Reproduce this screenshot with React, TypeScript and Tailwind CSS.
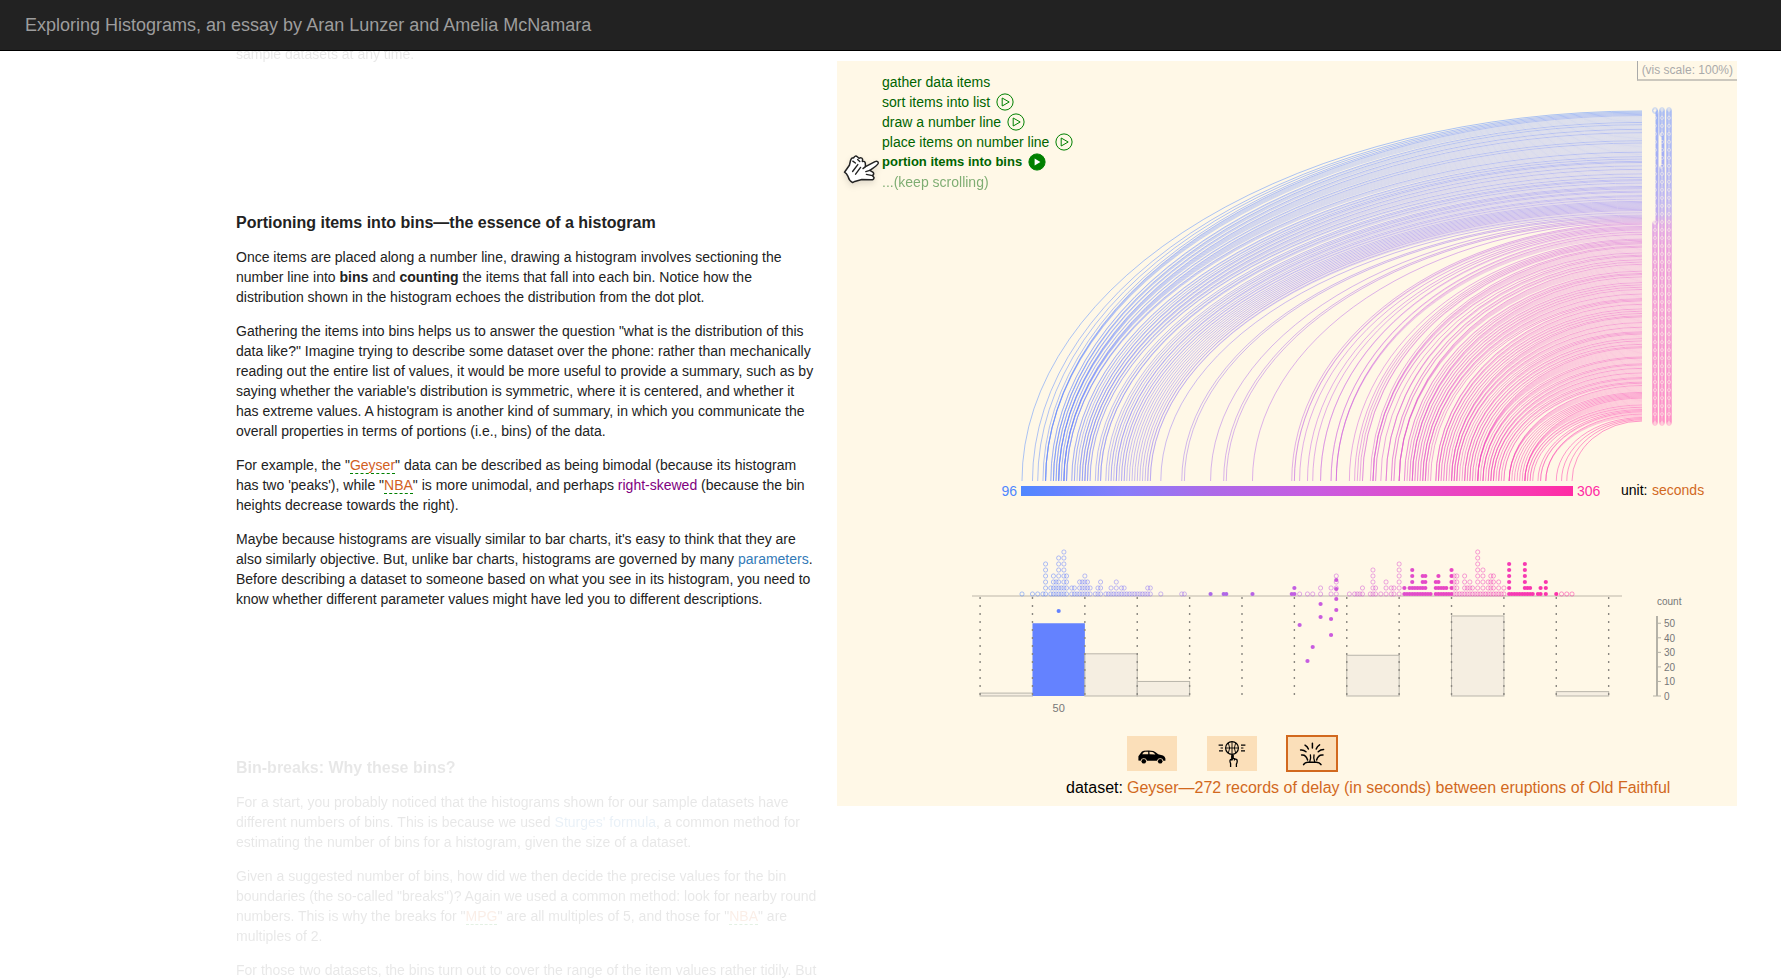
import React from "react";

/* Old Faithful eruption records, in minutes. */
const ERUPTIONS = `
3.600 1.800 3.333 2.283 4.533 2.883 4.700 3.600 1.950 4.350 1.833 3.917 4.200 1.750 4.700 2.167 1.750 4.800 1.600 4.250
1.800 1.750 3.450 3.067 4.533 3.600 1.967 4.083 3.850 4.433 4.300 4.467 3.367 4.033 3.833 2.017 1.867 4.833 1.833 4.783
4.350 1.883 4.567 1.750 4.533 3.317 3.833 2.100 4.633 2.000 4.800 4.716 1.833 4.833 1.733 4.883 3.717 1.667 4.567 4.317
2.233 4.500 1.750 4.800 1.817 4.400 4.167 4.700 2.067 4.700 4.033 1.967 4.500 4.000 1.983 5.067 2.017 4.567 3.883 3.600
4.133 4.333 4.100 2.633 4.067 4.933 3.950 4.517 2.167 4.000 2.200 4.333 1.867 4.817 1.833 4.300 4.667 3.750 1.867 4.900
2.483 4.367 2.100 4.500 4.050 1.867 4.700 1.783 4.850 3.683 4.733 2.300 4.900 4.417 1.700 4.633 2.317 4.600 1.817 4.417
2.617 4.067 4.250 1.967 4.600 3.767 1.917 4.500 2.267 4.650 1.867 4.167 2.800 4.333 1.833 4.383 1.883 4.933 2.033 3.733
4.233 2.233 4.533 4.817 4.333 1.983 4.633 2.017 5.100 1.800 5.033 4.000 2.400 4.600 3.567 4.000 4.500 4.083 1.800 3.967
2.200 4.150 2.000 3.833 3.500 4.583 2.367 5.000 1.933 4.617 1.917 2.083 4.583 3.333 4.167 4.333 4.500 2.417 4.000 4.167
1.883 4.583 4.250 3.767 2.033 4.433 4.083 1.833 4.417 2.183 4.800 1.833 4.800 4.100 3.966 4.233 3.500 4.366 2.250 4.667
2.100 4.350 4.133 1.867 4.600 1.783 4.367 3.850 1.933 4.500 2.383 4.700 1.867 3.833 3.417 4.233 2.400 4.800 2.000 4.150
1.867 4.267 1.750 4.483 4.000 4.117 4.083 4.267 3.917 4.550 4.083 2.417 4.183 2.217 4.450 1.883 1.850 4.283 3.950 2.333
4.150 2.350 4.933 2.900 4.583 3.833 2.083 4.367 2.133 4.350 2.200 4.450 3.567 4.500 4.150 3.817 3.917 4.450 2.000 4.283
4.767 4.533 1.850 4.250 1.983 2.250 4.750 4.117 2.150 4.417 1.817 4.467`;

const SECONDS = ERUPTIONS.trim()
  .split(/\s+/)
  .map((m) => Math.round(parseFloat(m) * 60))
  .sort((a, b) => a - b);

const STOPS: [number, number, number, number][] = [
  [96, 79, 135, 255],
  [110, 100, 130, 255],
  [135, 135, 125, 250],
  [168, 172, 106, 232],
  [208, 200, 92, 224],
  [250, 228, 75, 200],
  [290, 249, 56, 176],
  [306, 255, 44, 164],
];

function colorOf(v: number): string {
  let k = 0;
  while (k < STOPS.length - 2 && v > STOPS[k + 1][0]) k++;
  const a = STOPS[k];
  const b = STOPS[k + 1];
  const t = (v - a[0]) / (b[0] - a[0]);
  const mix = (i: number) => Math.round(a[i] + (b[i] - a[i]) * t);
  return `rgb(${mix(1)},${mix(2)},${mix(3)})`;
}

const xOf = (v: number) => 185 + ((v - 96) * 550) / 210;
const listY = (i: number) => 50 + (i * 310) / (SECONDS.length - 1);

/* Columns of the item list: the stretch [slimFrom, slimTo) is drawn narrower. */
const COLUMNS = [
  { x: 818, slimX: 820, slimFrom: 2, slimTo: 98 },
  { x: 825, slimX: 826, slimFrom: 22, slimTo: 50 },
  { x: 832, slimX: 832, slimFrom: 0, slimTo: 0 },
];

const BINS = [
  { from: 80, count: 2 },
  { from: 100, count: 50 },
  { from: 120, count: 29 },
  { from: 140, count: 10 },
  { from: 220, count: 28 },
  { from: 260, count: 55 },
  { from: 300, count: 3 },
];

/* Items on their way from the number line to their bin: [value, y]. */
const FALLING: [number, number][] = [
  [110, 550],
  [202, 564],
  [207, 586],
  [205, 600],
  [210, 543],
  [210, 556],
  [214, 558],
  [214, 574],
  [216, 519],
  [216, 528],
  [216, 538],
  [216, 549],
];

const isSolid = (v: number) =>
  (v > 160 && v <= 200) || (v > 240 && v <= 260) || (v > 280 && v <= 300);

function Visualisation() {
  const seen: Record<number, number> = {};
  const stacked = SECONDS.map((v) => {
    seen[v] = (seen[v] || 0) + 1;
    return { v, level: seen[v] - 1 };
  });
  const edges = Array.from({ length: 13 }, (_, i) => 80 + i * 20);
  const base = 635;
  const perItem = 1.455;

  return (
    <svg
      viewBox="0 0 900 745"
      className="col-start-1 row-start-1 w-full font-[Liberation_Sans,Arial,sans-serif]"
      role="img"
      aria-label="Histogram construction for the Geyser dataset"
    >
      <defs>
        <linearGradient id="scale" x1="0" x2="1" y1="0" y2="0">
          {STOPS.map((s) => (
            <stop key={s[0]} offset={(s[0] - 96) / 210} stopColor={colorOf(s[0])} />
          ))}
        </linearGradient>
      </defs>

      <g fill="none" strokeWidth="1">
        {stacked.map(({ v, level }, i) => {
          const x = xOf(v);
          const y = listY(i);
          return (
            <path
              key={i}
              d={`M${x} 420A${805 - x} ${420 - y} 0 0 1 805 ${y}`}
              stroke={colorOf(v)}
              strokeOpacity={level === 0 ? 0.48 : 0.26}
            />
          );
        })}
      </g>

      {COLUMNS.map((c) => (
        <g key={c.x} fill="none" strokeWidth="1">
          {SECONDS.map((v, i) => {
            const slim = i >= c.slimFrom && i < c.slimTo;
            return (
              <ellipse
                key={i}
                cx={slim ? c.slimX : c.x}
                cy={listY(i) - 1 + (i * 3) / 271}
                rx={slim ? 1 : 2.4}
                ry="2.4"
                stroke={colorOf(v)}
                strokeOpacity="0.26"
              />
            );
          })}
          {SECONDS.map((v, i) =>
            i % 7 === c.x % 7 ? (
              <circle key={i} cx={c.x} cy={listY(i)} r="1.6" stroke="#fff8e7" strokeOpacity="0.45" />
            ) : null
          )}
        </g>
      ))}

      <rect x="184" y="425" width="552" height="10" fill="url(#scale)" />
      <g fontSize="14">
        <text x="180" y="435" textAnchor="end" fill="#4f87ff">96</text>
        <text x="740" y="435" fill="#ff2ca4">306</text>
        <text x="784" y="434" fill="#000">unit:</text>
        <text x="815" y="434" fill="#d2691e">seconds</text>
      </g>

      <rect x="135" y="534" width="650" height="2" fill="#ded7c8" />

      <g>
        {stacked.map(({ v, level }, i) =>
          isSolid(v) ? (
            <circle key={i} cx={xOf(v)} cy={533 - level * 6} r="2.1" fill={colorOf(v)} />
          ) : (
            <circle
              key={i}
              cx={xOf(v)}
              cy={533 - level * 6}
              r="2.1"
              fill="none"
              stroke={colorOf(v)}
              strokeOpacity="0.5"
            />
          )
        )}
      </g>

      {BINS.map(({ from, count }) => {
        const h = count * perItem;
        const full = from === 100;
        return (
          <rect
            key={from}
            x={xOf(from)}
            y={base - h}
            width={52.4}
            height={h}
            fill={full ? "#6482ff" : "#f5eee1"}
            stroke={full ? "none" : "#b9b5ab"}
          />
        );
      })}

      {edges.map((e) => (
        <line
          key={e}
          x1={xOf(e)}
          x2={xOf(e)}
          y1="536"
          y2="634"
          stroke="#8b8881"
          strokeWidth="1.4"
          strokeDasharray="2 6"
        />
      ))}

      {FALLING.map(([v, y], i) => (
        <circle key={i} cx={xOf(v)} cy={y} r="2.1" fill={colorOf(v)} />
      ))}

      <g fill="#777">
        <text x={xOf(110)} y="651" fontSize="11" textAnchor="middle">50</text>
        <g fontSize="10">
          <text x="820" y="544">count</text>
          {[0, 10, 20, 30, 40, 50].map((n) => (
            <text key={n} x="827" y={base - n * perItem + 4}>{n}</text>
          ))}
        </g>
      </g>
      <g fill="#b5b2a8">
        <rect x="819" y="555" width="2" height="80" />
        <rect x="816" y="634.5" width="8" height="1" />
        {[10, 20, 30, 40, 50].map((n) => (
          <rect key={n} x="820" y={base - n * perItem - 0.5} width="4" height="1" />
        ))}
      </g>
    </svg>
  );
}

function PlayIcon({ solid }: { solid?: boolean }) {
  return (
    <svg viewBox="0 0 18 18" className="size-[18px]" aria-hidden="true">
      <circle cx="9" cy="9" r="8.1" fill={solid ? "#008000" : "none"} stroke="#008000" strokeWidth="1" />
      <path
        d={solid ? "M6.6 5.6L12.4 9L6.6 12.4Z" : "M6.2 5L13.2 9L6.2 13Z"}
        fill={solid ? "#fff" : "none"}
        stroke={solid ? "none" : "#008000"}
        strokeWidth="1"
      />
    </svg>
  );
}

function HandIcon() {
  return (
    <svg viewBox="0 0 37 30" className="absolute top-0.5 left-1.5 h-[30px] w-[37px] drop-shadow-md" aria-hidden="true">
      <path
        d="M1.5 18.2L6.4 11.2L7.6 6.2Q8.3 3.6 10.6 3.9Q12.3 1 14.3 2.7L16 4.2Q18.6 3 19.6 5.2L19.4 7.4Q22.2 7 22.3 9.3L22.5 12.6L32 7.6Q35.6 6.6 35.2 9.4Q34.6 11.4 26.8 16.4L29.8 18.2Q31.8 19.8 29.4 21.6L31 23.4Q31 26 28 25.8L18.8 25.6L11.8 27.4L9.6 28.6Q6 26.6 5 22.4Q3.6 19.4 1.5 18.2Z"
        fill="#fff"
        stroke="#222"
        strokeWidth="1.5"
        strokeLinejoin="round"
      />
      <path
        d="M9.6 17.5L14.8 10.6M12.6 20.2L17.6 13.4M9.8 7.2L12.4 9M14.6 5.6L16.8 7.6M22.5 12.6L20 14.6M23.4 20.4L29.4 21.6M26.8 16.4L22.8 17.6"
        fill="none"
        stroke="#222"
        strokeWidth="1.4"
        strokeLinecap="round"
      />
    </svg>
  );
}

const STEPS = [
  { label: "gather data items", play: false },
  { label: "sort items into list", play: true },
  { label: "draw a number line", play: true },
  { label: "place items on number line", play: true },
  { label: "portion items into bins", play: true, active: true },
];

function CarIcon() {
  return (
    <svg viewBox="0 -6 28 20" className="h-5 w-7" aria-hidden="true">
      <path
        fillRule="evenodd"
        d="M0.4 10.6V6.2L2.6 3.2Q3.6 1.2 6 .8Q11 0 15.4 .9Q17.4 1.6 20.2 4.3L25 5.4Q27 6.2 27.4 8.4V10.8H25.4A3.3 3.3 0 0 0 19 10.8H9A3.3 3.3 0 0 0 2.6 10.8ZM4.2 4.2H10.2V1.7H7Q5.3 1.8 4.2 4.2ZM11.6 4.3L17.4 4.6Q15.8 2.4 14.4 2L11.4 1.7Z"
      />
      <circle cx="5.8" cy="11.2" r="2.3" />
      <circle cx="22.2" cy="11.2" r="2.3" />
    </svg>
  );
}

function BasketballIcon() {
  return (
    <svg viewBox="0 0 28 28" className="size-7" fill="none" stroke="#000" aria-hidden="true">
      <circle cx="14" cy="8" r="6.4" strokeWidth="1.2" />
      <path d="M14 1.6V14.4M7.6 8H20.4M10.3 2.8Q13 8 10.3 13.2M17.7 2.8Q15 8 17.7 13.2" strokeWidth="0.9" />
      <path d="M0.6 5.2H5M2.6 8H5M1 10.8H5M23 5.2H27.4M23 8H25.4M23 10.8H27" strokeWidth="1.2" />
      <path d="M12.6 27V23.6Q11.4 20.6 12.4 19.6L13.8 20V15.4Q14.6 14.6 15.2 15.4V18.4L18.8 19.6Q19.8 21.6 18.4 24V27" strokeWidth="1.3" />
      <path d="M14.2 16V20M16.4 18.4V20.6" strokeWidth="1.2" />
    </svg>
  );
}

function GeyserIcon() {
  return (
    <svg
      viewBox="0 0 26 24"
      className="h-6 w-[26px]"
      fill="none"
      stroke="#000"
      strokeWidth="1.5"
      strokeLinecap="round"
      aria-hidden="true"
    >
      <path d="M13.4 1.2V6M6 3.2Q8.4 4.6 9.4 7M20.6 2.8Q18.2 4.2 17.2 7M1.6 8Q4.6 7.6 7 9.8M24.6 7.6Q21.6 7.6 19.2 9.8M2.6 13Q7 12.4 8.6 18M24 13Q19.2 12.4 17.6 18" />
      <path d="M11.4 13Q12.2 16.4 10.8 19.4M15 13Q14.2 16.4 15.6 19.4" strokeWidth="1.3" />
      <path d="M4.6 22.6Q6 20 9 20.2H17Q20.4 20 22 22.6" />
    </svg>
  );
}

const SAMPLES = [
  { name: "MPG", icon: <CarIcon />, selected: false },
  { name: "NBA", icon: <BasketballIcon />, selected: false },
  { name: "Geyser", icon: <GeyserIcon />, selected: true },
];

function DatasetLink({ children }: { children: React.ReactNode }) {
  return (
    <a href="#dataset" className="border-b border-dashed border-[#008000] text-[#d2601e]">
      {children}
    </a>
  );
}

function Section({ title, children, faded }: { title?: string; children: React.ReactNode; faded?: boolean }) {
  return (
    <section className={faded ? "flex flex-col gap-3.5 opacity-10" : "flex flex-col gap-3.5"}>
      {title && <h2 className="text-base leading-5 font-bold text-[#222]">{title}</h2>}
      {children}
    </section>
  );
}

export default function App() {
  return (
    <div className="min-h-screen bg-white font-[Liberation_Sans,Arial,sans-serif] text-sm leading-5 text-[#222]">
      <header className="fixed inset-x-0 top-0 z-10 border-b border-black bg-[#222] px-[25px] py-[15px]">
        <h1 className="text-lg leading-5 text-[#9d9d9d]">
          Exploring Histograms, an essay by Aran Lunzer and Amelia McNamara
        </h1>
      </header>

      <main className="grid grid-cols-[minmax(0,1fr)_900px] items-start gap-x-[18px] pr-11 pl-[236px]">
        <article className="flex h-screen flex-col gap-[149px] overflow-hidden pt-11">
          <Section faded>
            <p>sample datasets at any time.</p>
          </Section>

          <Section title="Portioning items into bins—the essence of a histogram">
            <p>
              Once items are placed along a number line, drawing a histogram involves sectioning the number line into{" "}
              <strong>bins</strong> and <strong>counting</strong> the items that fall into each bin. Notice how the
              distribution shown in the histogram echoes the distribution from the dot plot.
            </p>
            <p>
              Gathering the items into bins helps us to answer the question "what is the distribution of this data
              like?" Imagine trying to describe some dataset over the phone: rather than mechanically reading out the
              entire list of values, it would be more useful to provide a summary, such as by saying whether the
              variable's distribution is symmetric, where it is centered, and whether it has extreme values. A histogram
              is another kind of summary, in which you communicate the overall properties in terms of portions (i.e.,
              bins) of the data.
            </p>
            <p>
              For example, the "<DatasetLink>Geyser</DatasetLink>" data can be described as being bimodal (because its
              histogram has two 'peaks'), while "<DatasetLink>NBA</DatasetLink>" is more unimodal, and perhaps{" "}
              <span className="text-[#800080]">right-skewed</span> (because the bin heights decrease towards the right).
            </p>
            <p>
              Maybe because histograms are visually similar to bar charts, it's easy to think that they are also
              similarly objective. But, unlike bar charts, histograms are governed by many{" "}
              <a href="#parameters" className="text-[#337ab7]">parameters</a>. Before describing a dataset to someone
              based on what you see in its histogram, you need to know whether different parameter values might have led
              you to different descriptions.
            </p>
          </Section>

          <Section title="Bin-breaks: Why these bins?" faded>
            <p>
              For a start, you probably noticed that the histograms shown for our sample datasets have different numbers
              of bins. This is because we used <a href="#sturges" className="text-[#337ab7]">Sturges' formula</a>, a
              common method for estimating the number of bins for a histogram, given the size of a dataset.
            </p>
            <p>
              Given a suggested number of bins, how did we then decide the precise values for the bin boundaries (the
              so-called "breaks")? Again we used a common method: look for nearby round numbers. This is why the breaks
              for "<DatasetLink>MPG</DatasetLink>" are all multiples of 5, and those for "<DatasetLink>NBA</DatasetLink>"
              are multiples of 2.
            </p>
            <p>For those two datasets, the bins turn out to cover the range of the item values rather tidily. But</p>
          </Section>
        </article>

        <aside className="mt-[61px] grid bg-[#fff8e7]">
          <Visualisation />
          <div className="z-[1] col-start-1 row-start-1 flex flex-col">
            <div className="flex items-start justify-between">
              <ol className="pt-[11px] text-[#006400]">
                {STEPS.map((s) => (
                  <li key={s.label} className="relative flex items-center gap-1.5 pl-[45px]">
                    {s.active && <HandIcon />}
                    <span className={s.active ? "text-[13px] leading-5 font-bold" : ""}>{s.label}</span>
                    {s.play && (
                      <button type="button" aria-label={`Play: ${s.label}`}>
                        <PlayIcon solid={s.active} />
                      </button>
                    )}
                  </li>
                ))}
                <li className="pl-[45px] opacity-50">...(keep scrolling)</li>
              </ol>
              <div className="border-b-2 border-l border-b-[#ccc8be] border-l-[#aaa] pr-1 pl-1 text-xs leading-[18px] text-[#aaa]">
                (vis scale: 100%)
              </div>
            </div>

            <div className="mt-auto grid grid-cols-[286px_1fr] gap-x-1 gap-y-1.5 pb-[7px]">
              <div className="col-start-2 flex gap-[30px]">
                {SAMPLES.map((s) => (
                  <button
                    key={s.name}
                    type="button"
                    aria-label={s.name}
                    aria-pressed={s.selected}
                    className={
                      s.selected
                        ? "flex h-[35px] w-[50px] items-center justify-center bg-[#fbdfb9] outline-2 -outline-offset-1 outline-[#d2691e]"
                        : "flex h-[35px] w-[50px] items-center justify-center bg-[#fbdfb9]"
                    }
                  >
                    {s.icon}
                  </button>
                ))}
              </div>
              <span className="text-right text-base leading-[22px] text-black">dataset:</span>
              <span className="text-base leading-[22px] text-[#d2691e]">
                Geyser—272 records of delay (in seconds) between eruptions of Old Faithful
              </span>
            </div>
          </div>
        </aside>
      </main>
    </div>
  );
}
